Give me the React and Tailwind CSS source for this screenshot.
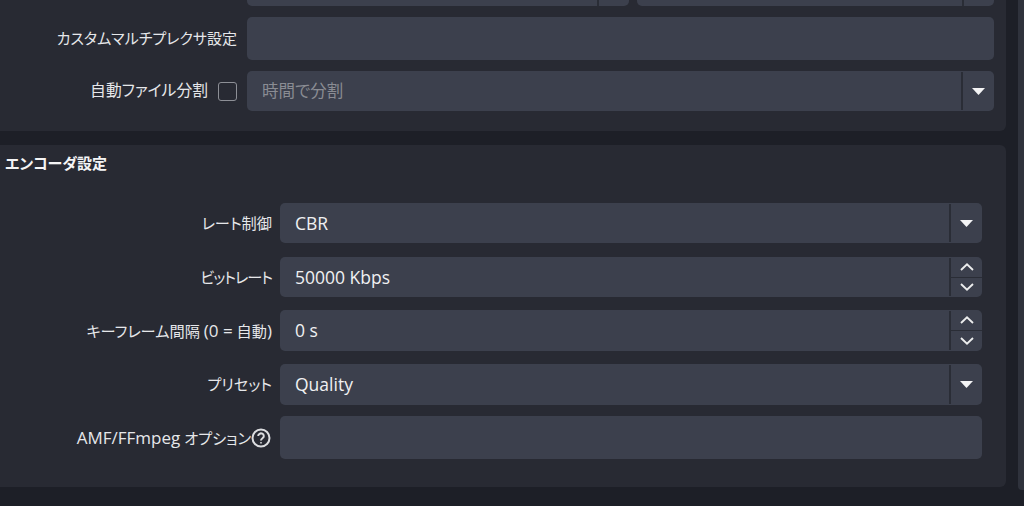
import React from 'react';

const font = "font-['Open_Sans','Noto_Sans_CJK_JP',sans-serif] [font-feature-settings:'palt']";

const Caret = () => (
  <svg width="13" height="7" viewBox="0 0 13 7">
    <path d="M0 0H13L6.500 7Z" fill="#f4f4f5" />
  </svg>
);

const Chevron = ({ up }) => (
  <svg width="14" height="8" viewBox="0 0 14 8" fill="none" stroke="#eceded" strokeWidth="1.900">
    <path d={up ? 'M1 7L7 1.400L13 7' : 'M1 1L7 6.600L13 1'} />
  </svg>
);

const Help = () => (
  <svg width="20" height="20" viewBox="0 0 20 20" fill="none" stroke="#dcdde0" strokeWidth="2">
    <circle cx="10" cy="10" r="8.500" />
    <path d="M7.200 8a2.800 2.600 0 1 1 4.300 2.200c-1 .7-1.500 1.100-1.500 2.200" />
    <circle cx="10" cy="14.800" r="0.500" fill="#dcdde0" strokeWidth="1" />
  </svg>
);

const Select = ({ value, muted }) => (
  <div className="flex h-full flex-1 items-stretch rounded-[5px] bg-[#3c404d]">
    <div className={`flex flex-1 items-center pl-[15px] ${muted ? 'text-[16.500px] text-[#8a8c93]' : 'text-[17.500px] text-[#f0f0f2]'}`}>
      {value}
    </div>
    <div className="my-[1px] w-[2px] bg-[#2a2d36]" />
    <div className="flex w-[31px] items-center justify-center"><Caret /></div>
  </div>
);

const Spin = ({ value }) => (
  <div className="flex h-full flex-1 items-stretch rounded-[5px] bg-[#3c404d]">
    <div className="flex flex-1 items-center pl-[15px] text-[17.500px] text-[#f0f0f2]">{value}</div>
    <div className="my-[1px] w-[2px] bg-[#2a2d36]" />
    <div className="flex w-[31px] flex-col">
      <div className="flex flex-1 items-center justify-center"><Chevron up /></div>
      <div className="h-[1px] bg-[#2a2d36]" />
      <div className="flex flex-1 items-center justify-center"><Chevron /></div>
    </div>
  </div>
);

const Row = ({ label, height, className, children }) => (
  <div className={`flex items-center ${height} ${className || ''}`}>
    <div className="flex w-[272px] shrink-0 items-center justify-end text-[15.200px] text-[#e6e7ea]">{label}</div>
    <div className="ml-[8px] flex h-full flex-1">{children}</div>
  </div>
);

export default function App() {
  return (
    <div className={`flex h-[506px] w-[1024px] overflow-hidden bg-[#1d1f27] ${font}`}>
      <div className="w-[1006px] shrink-0">
        <section className="h-[131px] rounded-br-[6px] bg-[#282a33] pr-[12px]">
          <div className="ml-[247px] flex h-[6px] gap-[8px]">
            <div className="flex w-[382px] rounded-b-[5px] bg-[#3c404d]">
              <div className="flex-1" />
              <div className="w-[2px] bg-[#2a2d36]" />
              <div className="w-[30px]" />
            </div>
            <div className="flex flex-1 rounded-b-[5px] bg-[#3c404d]">
              <div className="flex-1" />
              <div className="w-[2px] bg-[#2a2d36]" />
              <div className="w-[30px]" />
            </div>
          </div>
          <div className="mt-[11px] flex h-[43px] items-center">
            <div className="w-[237px] text-right text-[15px] text-[#e6e7ea]">カスタムマルチプレクサ設定</div>
            <div className="ml-[10px] h-full flex-1 rounded-[5px] bg-[#3c404d]" />
          </div>
          <div className="mt-[11px] flex h-[40px] items-center">
            <div className="flex w-[237px] items-center justify-end text-[15.800px] text-[#e6e7ea]">
              自動ファイル分割
              <span className="ml-[10px] h-[19px] w-[19px] rounded-[3px] border-[1.5px] border-[#8d8f96]" />
            </div>
            <div className="ml-[10px] flex h-full flex-1"><Select value="時間で分割" muted /></div>
          </div>
        </section>

        <section className="mt-[14px] h-[342px] rounded-r-[6px] bg-[#282a33] pr-[24px]">
          <h2 className="pl-[5px] pt-[7px] text-[15px] leading-[22px] font-bold text-[#f4f4f5]">エンコーダ設定</h2>
          <div className="mt-[29px] flex flex-col">
            <Row label="レート制御" height="h-[40px]"><Select value="CBR" /></Row>
            <Row label={<span className="tracking-[-1px]">ビットレート</span>} height="h-[40px]" className="mt-[14px]"><Spin value="50000 Kbps" /></Row>
            <Row
              label={<span>キーフレーム間隔 <span className="text-[17px]">(0 =</span> 自動<span className="text-[17px]">)</span></span>}
              height="h-[41px]"
              className="mt-[13px]"
            >
              <Spin value="0 s" />
            </Row>
            <Row label="プリセット" height="h-[41px]" className="mt-[13px]"><Select value="Quality" /></Row>
            <Row
              label={<><span><span className="text-[17px]">AMF/FFmpeg</span> オプション</span><span className="mr-[1px]"><Help /></span></>}
              height="h-[43px]"
              className="mt-[11px]"
            >
              <div className="h-full flex-1 rounded-[5px] bg-[#3c404d]" />
            </Row>
          </div>
        </section>
      </div>
      <div className="ml-[12px] h-[490px] w-[6px] rounded-bl-[4px] bg-[#2f323c]" />
    </div>
  );
}
